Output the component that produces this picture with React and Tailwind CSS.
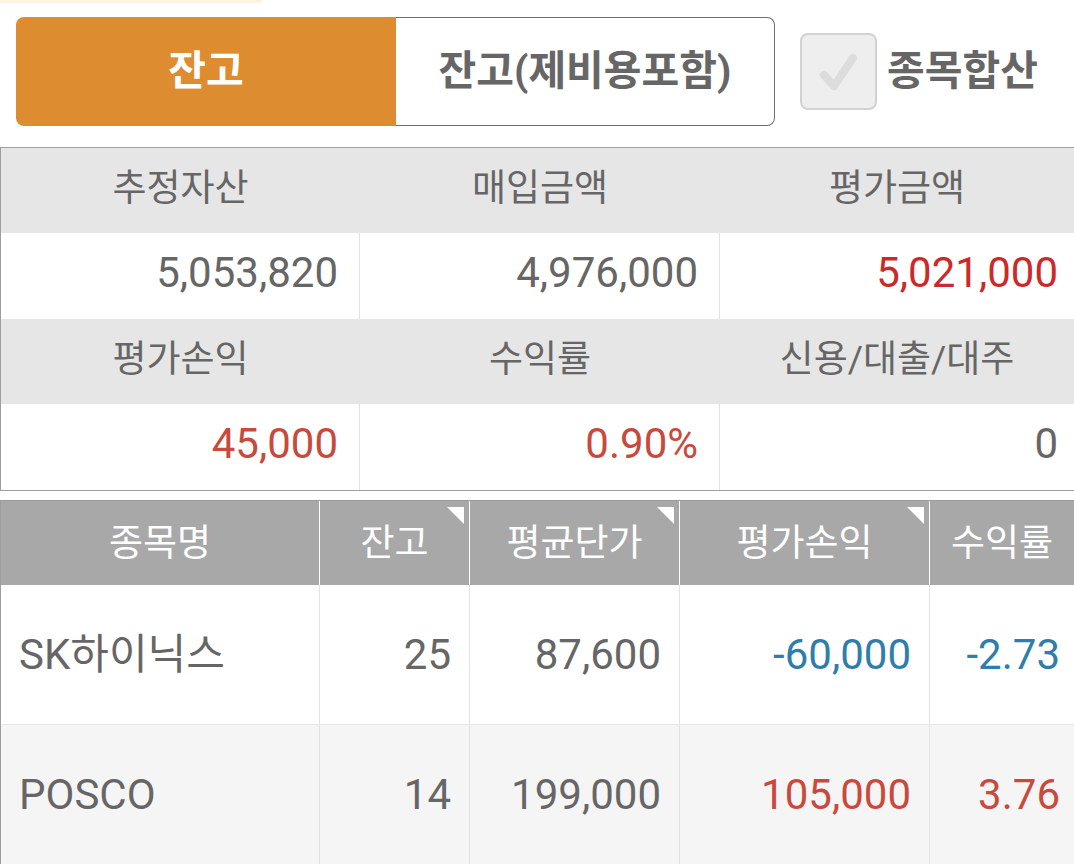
import React from "react";

const FONT = { fontFamily: "Roboto, 'Noto Sans CJK KR', 'Noto Sans', sans-serif" };

function Tri() {
  return (
    <span className="absolute top-[6px] right-[5px] w-0 h-0 border-l-[17px] border-l-transparent border-t-[17px] border-t-white" />
  );
}

export default function App() {
  const summary = [
    [
      { h: "추정자산", v: "5,053,820", c: "text-[#666666]" },
      { h: "매입금액", v: "4,976,000", c: "text-[#666666]" },
      { h: "평가금액", v: "5,021,000", c: "text-[#cc2a2a]" },
    ],
    [
      { h: "평가손익", v: "45,000", c: "text-[#c84a3c]" },
      { h: "수익률", v: "0.90%", c: "text-[#c84a3c]" },
      { h: "신용/대출/대주", v: "0", c: "text-[#666666]" },
    ],
  ];
  const widths = ["w-[359px]", "w-[360px]", "flex-1"];
  const cols = [
    { h: "종목명", w: "w-[319px]", tri: false },
    { h: "잔고", w: "w-[150px]", tri: true },
    { h: "평균단가", w: "w-[210px]", tri: true },
    { h: "평가손익", w: "w-[250px]", tri: true },
    { h: "수익률", w: "flex-1", tri: false },
  ];
  const rows = [
    {
      bg: "bg-white",
      cells: ["SK하이닉스", "25", "87,600", "-60,000", "-2.73"],
      colors: ["text-[#666666]", "text-[#666666]", "text-[#666666]", "text-[#2f7dab]", "text-[#2f7dab]"],
    },
    {
      bg: "bg-[#f5f5f5]",
      cells: ["POSCO", "14", "199,000", "105,000", "3.76"],
      colors: ["text-[#666666]", "text-[#666666]", "text-[#666666]", "text-[#c84a3c]", "text-[#c84a3c]"],
    },
  ];

  return (
    <div className="w-[1074px] h-[864px] overflow-hidden bg-white" style={FONT}>
      <div className="h-[3px] w-[262px] bg-[#fdf4de]" />
      {/* top controls */}
      <div className="flex items-center mt-[14px] ml-[16px] h-[109px]">
        <div className="flex w-[759px] h-[109px]">
          <div className="w-[380px] h-full bg-[#de8c30] rounded-l-[8px] flex items-center justify-center text-white font-bold text-[41px] leading-none">
            잔고
          </div>
          <div className="flex-1 h-full border border-l-0 border-[#6e6e6e] rounded-r-[8px] flex items-center justify-center text-[#666666] font-bold text-[41px] leading-none">
            잔고(제비용포함)
          </div>
        </div>
        <div className="ml-[25px] w-[77px] h-[77px] rounded-[8px] border-2 border-[#d2d2d2] bg-[#eeeeee] flex items-center justify-center">
          <svg width="46" height="46" viewBox="0 0 46 46">
            <path d="M8 26 L18 37 L37 9" fill="none" stroke="#dcdcdc" strokeWidth="8" strokeLinecap="round" strokeLinejoin="round" />
          </svg>
        </div>
        <div className="ml-[10px] text-[#666666] font-bold text-[41px] leading-none">종목합산</div>
      </div>

      {/* summary table */}
      <div className="mt-[21px] border-t border-l border-b border-[#9e9e9e]">
        {summary.map((row, ri) => (
          <div key={ri}>
            <div className="flex h-[85px] bg-[#e6e6e6]">
              {row.map((c, ci) => (
                <div key={ci} className={`${widths[ci]} flex items-center justify-center text-[37px] leading-none text-[#666666] pb-[4px]`}>
                  {c.h}
                </div>
              ))}
            </div>
            <div className="flex h-[86px] bg-white">
              {row.map((c, ci) => (
                <div
                  key={ci}
                  className={`${widths[ci]} flex items-center justify-end text-[42px] leading-none pb-[6px] ${c.c} ${ci < 2 ? "border-r border-[#e2e2e2] pr-[21px]" : "pr-[16px]"}`}
                >
                  {c.v}
                </div>
              ))}
            </div>
          </div>
        ))}
      </div>

      {/* holdings table */}
      <div className="mt-[9px] border-l border-[#9e9e9e]">
        <div className="flex h-[85px] bg-[#a8a8a8] border-t border-[#9a9a9a]">
          {cols.map((c, ci) => (
            <div
              key={ci}
              className={`${c.w} relative flex items-center justify-center text-white text-[37px] leading-none ${ci < 4 ? "border-r border-white" : ""}`}
            >
              {c.h}
              {c.tri && <Tri />}
            </div>
          ))}
        </div>
        {rows.map((r, ri) => (
          <div key={ri} className={`flex h-[140px] ${r.bg} ${ri === 0 ? "border-b border-[#e6e6e6]" : ""}`}>
            {r.cells.map((v, ci) => (
              <div
                key={ci}
                className={`${cols[ci].w} flex items-center text-[42px] leading-none ${r.colors[ci]} ${ci === 0 ? "justify-start pl-[18px]" : "justify-end"} ${ci < 4 ? "border-r border-[#e2e2e2]" : ""} ${ci > 0 && ci < 4 ? "pr-[18px]" : ""} ${ci === 4 ? "pr-[14px]" : ""}`}
              >
                {v}
              </div>
            ))}
          </div>
        ))}
      </div>
    </div>
  );
}
